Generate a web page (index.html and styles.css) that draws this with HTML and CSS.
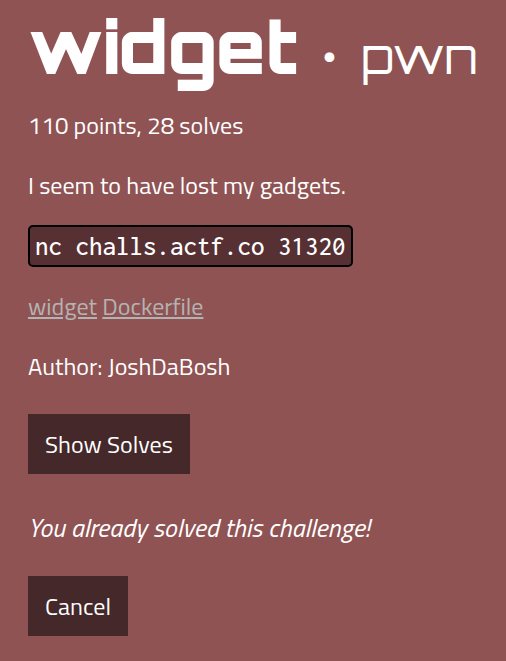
FILE: index.html
```html
<!DOCTYPE html>
<html lang="en">
<head>
<meta charset="utf-8">
<title>widget · pwn</title>
<link rel="stylesheet" href="styles.css">
</head>
<body>
<main class="challenge">
<h1 class="title">widget<span class="divider"> · </span><span class="category">pwn</span></h1>
<p class="row">110 points, 28 solves</p>
<p class="row">I seem to have lost my gadgets.</p>
<p class="row"><code class="command">nc challs.actf.co 31320</code></p>
<p class="row links"><a href="#widget">widget</a> <a href="#dockerfile">Dockerfile</a></p>
<p class="row">Author: JoshDaBosh</p>
<button class="button" type="button">Show Solves</button>
<p class="row solved"><em>You already solved this challenge!</em></p>
<button class="button" type="button">Cancel</button>
</main>
</body>
</html>
```
FILE: styles.css
```css
* { box-sizing: border-box; }
body {
  margin: 0;
  background: #905354;
  color: #fff;
  font-family: "Titillium Web", "Open Sans", sans-serif;
  font-size: 24px;
}
.challenge {
  display: flex;
  flex-direction: column;
  align-items: flex-start;
  padding: 0 28px 24px;
}
.title {
  margin: 0 0 3px;
  line-height: 92px;
  font-family: Orbitron, Inter, sans-serif;
  font-size: 72px;
  font-weight: 900;
  white-space: nowrap;
}
.divider, .category { font-size: 48px; }
.divider { margin: 0 7px; }
.category { font-weight: 400; }
.row { margin: 0 0 20px; line-height: 40px; }
.command {
  display: block;
  margin-bottom: -1px;
  padding: 0 5px;
  border: 2px solid #000;
  border-radius: 5px;
  background: #563032;
  font-family: Inconsolata, "DejaVu Sans Mono", monospace;
  font-size: 27px;
  font-weight: 500;
  line-height: 38px;
}
.links a { color: #b3b3b3; }
.button {
  margin-top: 8px;
  padding: 0 17px;
  border: 0;
  background: #452829;
  color: #fff;
  font: inherit;
  line-height: 60px;
}
.solved { margin-top: 34px; }
.solved em { font-size: 26px; }
```
